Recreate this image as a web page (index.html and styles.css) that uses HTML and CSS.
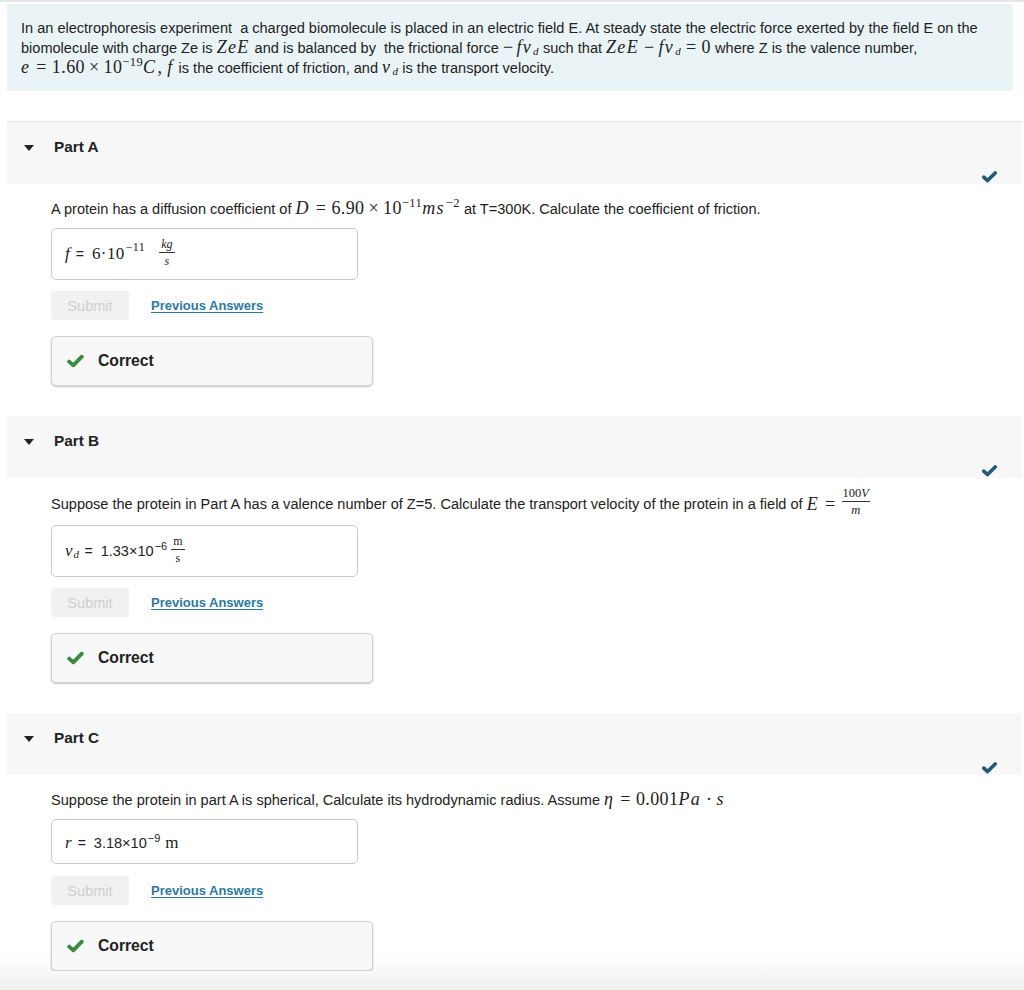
FILE: index.html
```html
<!DOCTYPE html>
<html lang="en">
<head>
<meta charset="utf-8">
<title>Electrophoresis</title>
<link rel="stylesheet" href="styles.css">
</head>
<body>
<div class="page">
  <div class="intro">
    In an electrophoresis experiment &nbsp;a charged biomolecule is placed in an electric field E. At steady state the electric force exerted by the field E on the<br>
    biomolecule with charge Ze is <span class="m"><i>ZeE</i></span> and is balanced by &nbsp;the frictional force <span class="m"><span class="un">&minus;</span><i>fv</i><sub class="sub">d</sub></span> such that <span class="m"><i>ZeE</i><span class="bin">&minus;</span><i>fv</i><sub class="sub">d</sub><span class="rel">=</span>0</span> where Z is the valence number,<br>
    <span class="m"><i>e</i><span class="rel">=</span>1.60<span class="bin">&times;</span>10<sup class="sup">&minus;19</sup><i>C</i>, <i>f</i></span> is the coefficient of friction, and <span class="m"><i>v</i><sub class="sub">d</sub></span> is the transport velocity.
  </div>

  <section class="part first">
    <div class="part-head">
      <div class="part-title"><span class="caret"></span>Part A</div>
      <svg class="done" width="15" height="12" viewBox="0 0 15 12"><path d="M1.8 6.2 L5.6 9.6 L13.2 2" fill="none" stroke="#1f5a76" stroke-width="3.6" stroke-linecap="round" stroke-linejoin="round"/></svg>
    </div>
    <div class="part-body">
      <p class="q">A protein has a diffusion coefficient of <span class="m"><i>D</i><span class="rel">=</span>6.90<span class="bin">&times;</span>10<sup class="sup">&minus;11</sup><i>ms</i><sup class="sup">&minus;2</sup></span> at T=300K. Calculate the coefficient of friction.</p>
      <div class="answer">
        <span class="m ans-var"><i>f</i></span><span class="eq">=</span>
        <span class="m ans-num">6&middot;10<sup class="sup2">&minus;11</sup></span>
        <span class="frac it"><span class="num">kg</span><span class="den">s</span></span>
      </div>
      <div class="actions"><button class="submit" type="button">Submit</button><a class="prev" href="#">Previous Answers</a></div>
      <div class="feedback">
        <svg width="17" height="14" viewBox="0 0 17 14"><path d="M2.2 7.6 L6.3 11.3 L14.8 2.7" fill="none" stroke="#3b8a3f" stroke-width="3.8" stroke-linecap="round" stroke-linejoin="round"/></svg>
        <span>Correct</span>
      </div>
    </div>
  </section>

  <section class="part">
    <div class="part-head">
      <div class="part-title"><span class="caret"></span>Part B</div>
      <svg class="done" width="15" height="12" viewBox="0 0 15 12"><path d="M1.8 6.2 L5.6 9.6 L13.2 2" fill="none" stroke="#1f5a76" stroke-width="3.6" stroke-linecap="round" stroke-linejoin="round"/></svg>
    </div>
    <div class="part-body">
      <p class="q qb">Suppose the protein in Part A has a valence number of Z=5. Calculate the transport velocity of the protein in a field of <span class="m"><i>E</i><span class="rel">=</span></span><span class="frac qfrac"><span class="num">100<i>V</i></span><span class="den"><i>m</i></span></span></p>
      <div class="answer">
        <span class="m ans-var"><i>v</i><sub class="sub">d</sub></span><span class="eq">=</span>
        <span class="ans-sans">1.33&times;10<sup class="sup3">&minus;6</sup></span>
        <span class="frac up"><span class="num">m</span><span class="den">s</span></span>
      </div>
      <div class="actions"><button class="submit" type="button">Submit</button><a class="prev" href="#">Previous Answers</a></div>
      <div class="feedback">
        <svg width="17" height="14" viewBox="0 0 17 14"><path d="M2.2 7.6 L6.3 11.3 L14.8 2.7" fill="none" stroke="#3b8a3f" stroke-width="3.8" stroke-linecap="round" stroke-linejoin="round"/></svg>
        <span>Correct</span>
      </div>
    </div>
  </section>

  <section class="part">
    <div class="part-head">
      <div class="part-title"><span class="caret"></span>Part C</div>
      <svg class="done" width="15" height="12" viewBox="0 0 15 12"><path d="M1.8 6.2 L5.6 9.6 L13.2 2" fill="none" stroke="#1f5a76" stroke-width="3.6" stroke-linecap="round" stroke-linejoin="round"/></svg>
    </div>
    <div class="part-body">
      <p class="q">Suppose the protein in part A is spherical, Calculate its hydrodynamic radius. Assume <span class="m"><i>&eta;</i><span class="rel">=</span>0.001<i>Pa</i><span class="bin">&middot;</span><i>s</i></span></p>
      <div class="answer short">
        <span class="m ans-var"><i>r</i></span><span class="eq">=</span>
        <span class="ans-sans">3.18&times;10<sup class="sup3">&minus;9</sup></span>
        <span class="m unit">m</span>
      </div>
      <div class="actions"><button class="submit" type="button">Submit</button><a class="prev" href="#">Previous Answers</a></div>
      <div class="feedback">
        <svg width="17" height="14" viewBox="0 0 17 14"><path d="M2.2 7.6 L6.3 11.3 L14.8 2.7" fill="none" stroke="#3b8a3f" stroke-width="3.8" stroke-linecap="round" stroke-linejoin="round"/></svg>
        <span>Correct</span>
      </div>
    </div>
  </section>
</div>
</body>
</html>
```

FILE: styles.css
```css
html {
  background: linear-gradient(to bottom, #ffffff 0, #ffffff 955px, #efefef 990px);
  min-height: 990px;
}
body {
  margin: 0;
  font-family: "Liberation Sans", Arial, Helvetica, sans-serif;
  font-size: 14.55px;
  color: #222;
  line-height: 20px;
}
.page {
  border-top: 2px solid #e6e6e6;
  padding: 2px 0 0 7px;
}
.intro {
  box-sizing: border-box;
  width: 1006px;
  background: #eaf4f6;
  padding: 14px 10px 13px 14px;
  line-height: 20px;
  white-space: nowrap;
}
.m {
  font-family: "Liberation Serif", "Times New Roman", serif;
  font-size: 18px;
  line-height: 0;
  letter-spacing: 0.4px;
}
.m i { font-style: italic; padding-right: 1px; letter-spacing: 1.3px; }
.un { margin-right: 3px; }
.rel { margin: 0 5px; }
.bin { margin: 0 4px; }
.sub {
  font-size: 11px;
  font-style: italic;
  line-height: 0;
  vertical-align: -2px;
}
.sup {
  font-size: 12.5px;
  line-height: 0;
  vertical-align: 7px;
}

.part {
  width: 1015px;
  margin-top: 30px;
}
.part.first { border-top: 1px solid #e4e4e4; }
.part-head {
  box-sizing: border-box;
  height: 62px;
  background: #f7f7f7;
  padding: 15px 25px 1px 17px;
  display: flex;
  justify-content: space-between;
}
.part-title {
  font-weight: bold;
  font-size: 15.3px;
  color: #222;
  height: 20px;
  display: flex;
  align-items: center;
}
.caret {
  width: 0;
  height: 0;
  border-left: 5px solid transparent;
  border-right: 5px solid transparent;
  border-top: 6px solid #222;
  margin-right: 20px;
  margin-top: 1px;
}
.done { align-self: flex-end; }

.part-body { padding-left: 44px; }
.q {
  margin: 15px 0 0;
  line-height: 20px;
  height: 20px;
  white-space: nowrap;
}
.qb { margin-top: 12px; height: 28px; display: flex; align-items: center; }
.qb .m { margin: 0 1px 0 4px; }

.answer {
  box-sizing: border-box;
  width: 307px;
  height: 52px;
  margin-top: 9px;
  border: 1px solid #c9c9c9;
  border-radius: 5px;
  display: flex;
  align-items: center;
  padding: 0 0 0 13px;
}
.qb + .answer { margin-top: 7px; }
.answer.short { height: 45px; padding-top: 2px; }
.ans-var { font-size: 17px; line-height: 20px; }
.ans-var i { letter-spacing: 0; }
.eq { margin: 0 8px 0 5px; font-size: 14px; }
.ans-num { font-size: 17px; line-height: 20px; margin-right: 14px; }
.sup2 { font-size: 12px; vertical-align: 8px; line-height: 0; margin-left: 1px; }
.ans-sans { font-size: 14.55px; margin-right: 4px; }
.sup3 { font-size: 11px; vertical-align: 6px; line-height: 0; margin-left: 1px; }
.unit { font-size: 17px; line-height: 20px; margin-left: 1px; }

.frac {
  display: inline-flex;
  flex-direction: column;
  align-items: center;
  font-family: "Liberation Serif", "Times New Roman", serif;
  font-size: 12px;
  line-height: 12px;
  margin-top: -4px;
}
.frac .num { padding: 0 2px 2px; border-bottom: 1px solid #333; }
.frac .den { padding-top: 2px; }
.frac.it { font-style: italic; }
.qfrac { font-size: 12.5px; line-height: 12px; margin-top: -6px; }
.qfrac .num { padding: 0 1px 2px; }

.actions {
  margin-top: 11px;
  height: 29px;
  display: flex;
  align-items: center;
  gap: 22px;
}
.short + .actions { margin-top: 12px; }
.submit {
  width: 78px;
  height: 29px;
  border: none;
  border-radius: 3px;
  background: #f1f1f1;
  color: #cfcfcf;
  font-family: "Liberation Sans", Arial, sans-serif;
  font-size: 14.55px;
  padding: 0;
}
.prev {
  color: #2b79a2;
  font-weight: bold;
  font-size: 13px;
  text-decoration: underline;
  text-underline-offset: 2px;
}

.feedback {
  box-sizing: border-box;
  width: 322px;
  height: 50px;
  margin-top: 16px;
  border: 1px solid #d0d0d0;
  border-radius: 5px;
  background: #f8f8f8;
  box-shadow: 0 1px 2px rgba(0, 0, 0, 0.22);
  display: flex;
  align-items: center;
  padding-left: 15px;
  gap: 14px;
  font-weight: bold;
  font-size: 15.7px;
  color: #222;
}
```
